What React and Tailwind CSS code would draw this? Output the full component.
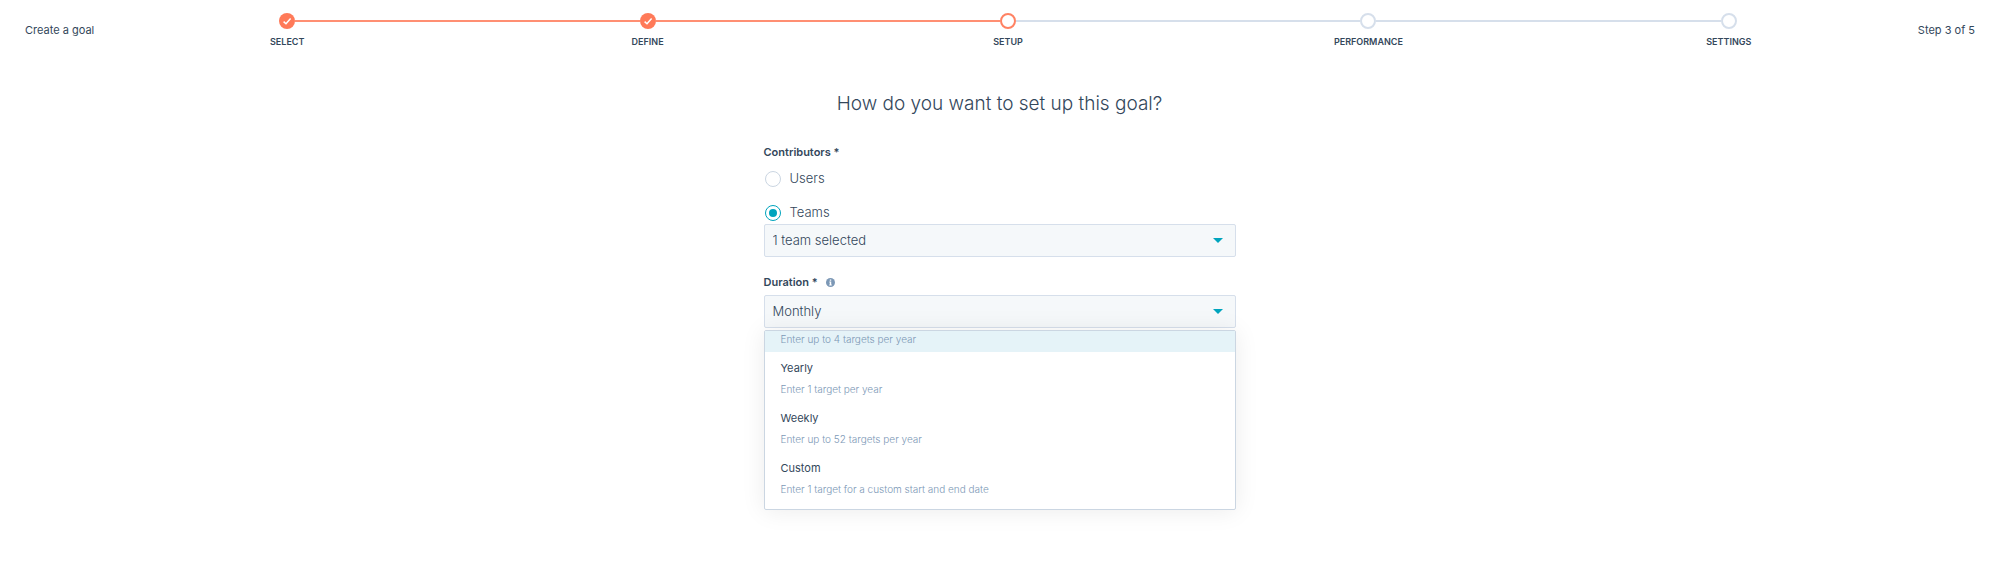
import { useState } from "react";

const STEPS = [
  { label: "Select", state: "done" },
  { label: "Define", state: "done" },
  { label: "Setup", state: "current" },
  { label: "Performance", state: "todo" },
  { label: "Settings", state: "todo" },
];

const DURATIONS = [
  { name: "Yearly", hint: "Enter 1 target per year" },
  { name: "Weekly", hint: "Enter up to 52 targets per year" },
  { name: "Custom", hint: "Enter 1 target for a custom start and end date" },
];

const LINE = {
  on: "h-[2px] flex-1 bg-[#ff8f73]",
  off: "h-[2px] flex-1 bg-[#d6dfeb]",
  none: "h-[2px] flex-1",
};

const DOT = {
  done: "flex size-4 items-center justify-center rounded-full bg-[#ff7a59]",
  current: "size-4 rounded-full border-2 border-[#ff8263] bg-white",
  todo: "size-4 rounded-full border-2 border-[#d6dfeb] bg-white",
};

function Step({ label, state, before, after }) {
  return (
    <li className="flex flex-col items-center gap-[6px]">
      <div className="flex w-full items-center">
        <span className={LINE[before]} />
        <span className={DOT[state]}>
          {state === "done" && (
            <svg viewBox="0 0 16 16" className="size-4" fill="none" stroke="#fff" strokeWidth="1.5">
              <path d="M4.6 8.6 7 10.8 11.6 5.6" />
            </svg>
          )}
        </span>
        <span className={LINE[after]} />
      </div>
      <span className="text-[9px] leading-[14px] font-semibold text-[#33475b] uppercase">{label}</span>
    </li>
  );
}

function Header() {
  return (
    <header className="flex items-start pt-[13px] text-[11px] leading-4 font-normal">
      <p className="w-[107px] pt-[9px] pl-[25px] whitespace-nowrap">Create a goal</p>
      <ol className="grid flex-1 grid-cols-5">
        {STEPS.map((step, i) => {
          const before = i === 0 ? "none" : STEPS[i - 1].state === "done" ? "on" : "off";
          const after = i === STEPS.length - 1 ? "none" : step.state === "done" ? "on" : "off";
          return <Step key={step.label} {...step} before={before} after={after} />;
        })}
      </ol>
      <p className="w-[90px] pt-[9px] pr-6 text-right whitespace-nowrap">Step 3 of 5</p>
    </header>
  );
}

function SelectBox({ id, label, value }) {
  return (
    <div className="relative">
      <select
        id={id}
        aria-label={label}
        defaultValue={value}
        className="block h-[33px] w-full appearance-none rounded-[2px] border border-[#d6dfeb] bg-[#f5f8fa] px-2 text-[13px] font-light text-[#33475b]"
      >
        <option>{value}</option>
      </select>
      <svg viewBox="0 0 10 5" className="pointer-events-none absolute top-[14px] right-[13px] h-[5px] w-[10px]" fill="#00a4bd">
        <path d="M0 0h10L5 5z" />
      </svg>
    </div>
  );
}

function Radio({ label, checked, onChange }) {
  return (
    <label className="flex h-[18px] items-center gap-[9px] pl-px text-[13px] font-light">
      <span className="grid size-4 place-items-center">
        <input
          type="radio"
          name="contributors"
          checked={checked}
          onChange={onChange}
          className="peer col-start-1 row-start-1 size-4 appearance-none rounded-full border border-[#cbd6e2] bg-white checked:border-[#00a4bd]"
        />
        <span className="pointer-events-none col-start-1 row-start-1 size-2 rounded-full peer-checked:bg-[#00a4bd]" />
      </span>
      {label}
    </label>
  );
}

export default function App() {
  const [who, setWho] = useState("Teams");

  return (
    <div className="bg-white pb-12 font-['Inter','Liberation_Sans',sans-serif] text-[#33475b]">
      <Header />
      <main className="mx-auto w-full max-w-[472px] pt-[41px]">
        <h1 className="text-center text-[19px] leading-7 font-light whitespace-nowrap">
          How do you want to set up this goal?
        </h1>

        <fieldset className="pt-[26px]">
          <legend className="float-left w-full text-[11px] leading-4 font-semibold">Contributors *</legend>
          <div className="clear-both flex flex-col gap-4 pt-[10px]">
            <Radio label="Users" checked={who === "Users"} onChange={() => setWho("Users")} />
            <Radio label="Teams" checked={who === "Teams"} onChange={() => setWho("Teams")} />
          </div>
        </fieldset>
        <div className="pt-[2px]">
          <SelectBox id="team" label="Teams" value="1 team selected" />
        </div>

        <div className="flex items-center gap-2 pt-[17px] pb-[5px]">
          <label htmlFor="duration" className="text-[11px] leading-4 font-semibold">
            Duration *
          </label>
          <svg viewBox="0 0 10 10" className="size-[9px]">
            <circle cx="5" cy="5" r="5" fill="#7c98b6" />
            <path d="M4.2 1.7h1.6v1.4H4.2zM3.7 4h2.1v3.2h.6v1H3.6v-1h.6V5h-.5z" fill="#fff" />
          </svg>
        </div>
        <SelectBox id="duration" value="Monthly" />
        <ul className="relative mt-[2px] rounded-[2px] border border-[#cbd6e2] bg-white pb-[7px] shadow-[0_1px_24px_rgba(0,0,0,0.08)]">
          <li className="bg-[#e5f3f8] pb-[5px]">
            <button type="button" className="block w-full px-4 text-left text-[10px] leading-4 font-light text-[#7c98b6]">
              Enter up to 4 targets per year
            </button>
          </li>
          {DURATIONS.map((d) => (
            <li key={d.name}>
              <button type="button" className="flex h-[50px] w-full flex-col gap-[5px] px-4 pt-2 text-left">
                <span className="text-[11px] leading-4 font-normal">{d.name}</span>
                <span className="text-[10px] leading-4 font-light text-[#7c98b6]">{d.hint}</span>
              </button>
            </li>
          ))}
        </ul>
      </main>
    </div>
  );
}
